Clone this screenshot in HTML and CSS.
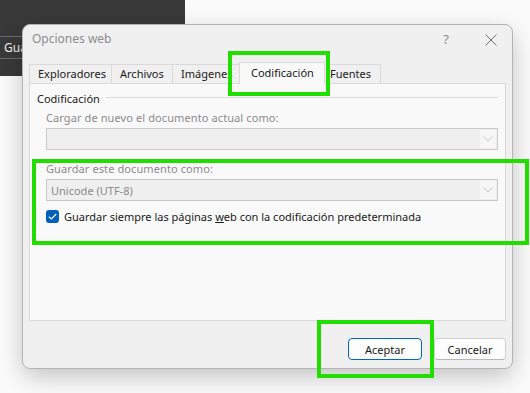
FILE: index.html
```html
<!DOCTYPE html>
<html lang="es">
<head>
    <meta charset="UTF-8">
    <meta name="viewport" content="width=device-width, initial-scale=1.0">
    <title>Opciones web</title>
    <link rel="stylesheet" href="styles.css">
</head>
<body>
    <!-- Window behind the dialog -->
    <div class="back-window">
        <div class="back-row">Gua</div>
    </div>

    <!-- Dialog -->
    <div class="dialog">
        <div class="titlebar">
            <span class="title">Opciones web</span>
            <span class="help">?</span>
            <svg class="close" width="12" height="12" viewBox="0 0 12 12">
                <path d="M0.5 0.5 L11.5 11.5 M11.5 0.5 L0.5 11.5" stroke="#6e6e6e" stroke-width="1" fill="none"/>
            </svg>
        </div>

        <div class="tabs">
            <div class="tab tab-1">Exploradores</div>
            <div class="tab tab-2">Archivos</div>
            <div class="tab tab-3">Imágenes</div>
            <div class="tab tab-active">Codificación</div>
            <div class="tab tab-5">Fuentes</div>
        </div>

        <div class="panel">
            <div class="group-title">
                <span>Codificación</span>
                <div class="group-line"></div>
            </div>
            <div class="group-body">
                <div class="field-label">Cargar de nuevo el documento actual como:</div>
                <div class="select">
                    <span class="select-text"></span>
                    <div class="select-arrow">
                        <svg width="10" height="6" viewBox="0 0 10 6"><path d="M0.5 0.5 L5 5 L9.5 0.5" stroke="#c4c4c4" fill="none"/></svg>
                    </div>
                </div>

                <div class="field-label second">Guardar este documento como:</div>
                <div class="select">
                    <span class="select-text">Unicode (UTF-8)</span>
                    <div class="select-arrow">
                        <svg width="10" height="6" viewBox="0 0 10 6"><path d="M0.5 0.5 L5 5 L9.5 0.5" stroke="#c4c4c4" fill="none"/></svg>
                    </div>
                </div>

                <div class="check-row">
                    <div class="checkbox">
                        <svg width="9" height="7" viewBox="0 0 9 7"><path d="M0.8 3.6 L3.3 6 L8.2 1" stroke="#fff" stroke-width="1.1" fill="none"/></svg>
                    </div>
                    <span>Guardar siempre las páginas <u>w</u>eb con la codificación predeterminada</span>
                </div>
            </div>
        </div>

        <div class="footer">
            <button class="btn btn-primary">Aceptar</button>
            <button class="btn">Cancelar</button>
        </div>
    </div>

    <!-- Green highlight boxes -->
    <div class="mark mark-tab"></div>
    <div class="mark mark-save"></div>
    <div class="mark mark-ok"></div>
</body>
</html>
```

FILE: styles.css
```css
body {
    margin: 0;
    width: 530px;
    height: 393px;
    background-color: #fbfbfb;
    font-family: "Noto Sans", sans-serif;
    font-size: 11px;
    color: #1a1a1a;
    position: relative;
    overflow: hidden;
}
.back-window {
    position: absolute;
    left: 0;
    top: 0;
    width: 185px;
    height: 76px;
    background-color: #393939;
}
.back-row {
    margin-top: 36px;
    height: 21px;
    border-top: 1px solid #6b6b6b;
    border-bottom: 1px solid #6b6b6b;
    color: #f0f0f0;
    font-size: 12px;
    line-height: 21px;
    padding-left: 4px;
}
.dialog {
    position: absolute;
    left: 22px;
    top: 24px;
    width: 489px;
    height: 343px;
    background-color: #f0f0f0;
    border: 1px solid #b4b4b4;
    border-radius: 8px;
    box-shadow: 0 8px 24px rgba(0, 0, 0, 0.22);
    display: flex;
    flex-direction: column;
}
.titlebar {
    height: 36px;
    display: flex;
    align-items: flex-start;
    padding-left: 9px;
    padding-top: 6px;
    box-sizing: border-box;
}
.title {
    flex: 1;
    color: #8c8c8c;
    font-size: 12px;
    line-height: 16px;
}
.help {
    color: #8c8c8c;
    font-size: 13px;
    line-height: 16px;
    margin-right: 36px;
}
.close {
    margin-right: 15px;
    margin-top: 3px;
}
.tabs {
    display: flex;
    align-items: flex-end;
    padding-left: 6px;
    height: 22px;
}
.tab {
    line-height: 18px;
    background-color: #f0f0f0;
    border: 1px solid #d9d9d9;
    border-bottom: none;
    padding: 0 0 0 8px;
    box-sizing: border-box;
    height: 19px;
    white-space: nowrap;
    overflow: hidden;
}
.tab-1 { width: 83px; }
.tab-2 { width: 61px; border-left: none; }
.tab-3 { width: 68px; border-left: none; }
.tab-5 { width: 56px; border-left: none; padding-left: 5px; }
.tab-active {
    width: 86px;
    height: 22px;
    margin-left: -2px;
    margin-bottom: -1px;
    padding-left: 11px;
    line-height: 20px;
    background-color: #f9f9f9;
    position: relative;
    z-index: 1;
}
.panel {
    margin: 0 6px 0 6px;
    height: 238px;
    background-color: #f9f9f9;
    border: 1px solid #d9d9d9;
    padding: 6px 7px 0 7px;
    box-sizing: border-box;
}
.group-title {
    display: flex;
    align-items: center;
    height: 16px;
}
.group-line {
    flex: 1;
    height: 1px;
    background-color: #dcdcdc;
    margin-left: 6px;
    margin-top: -1px;
}
.group-body {
    padding-left: 9px;
}
.field-label {
    color: #8b8b8b;
    margin-top: 3px;
    height: 18px;
    line-height: 18px;
    letter-spacing: 0.1px;
}
.field-label.second {
    margin-top: 10px;
}
.select {
    height: 22px;
    margin-top: 1px;
    background-color: #efefef;
    border: 1px solid #c9c9c9;
    box-sizing: border-box;
    display: flex;
    align-items: center;
}
.select-text {
    flex: 1;
    padding-left: 4px;
    color: #8b8b8b;
}
.select-arrow {
    width: 16px;
    height: 18px;
    margin-right: 1px;
    background-color: #f6f6f6;
    display: flex;
    align-items: center;
    justify-content: center;
}
.check-row {
    display: flex;
    align-items: center;
    margin-top: 8px;
}
.checkbox {
    width: 13px;
    height: 13px;
    border-radius: 3px;
    background-color: #005fb8;
    display: flex;
    align-items: center;
    justify-content: center;
    margin-right: 5px;
}
.footer {
    display: flex;
    justify-content: flex-end;
    gap: 12px;
    padding: 17px 6px 0 0;
}
.btn {
    font-family: "Noto Sans", sans-serif;
    font-size: 11px;
    color: #1a1a1a;
    height: 22px;
    background-color: #fdfdfd;
    border: 1px solid #d0d0d0;
    border-bottom-color: #b8b8b8;
    border-radius: 4px;
    padding: 0;
    width: 72px;
}
.btn-primary {
    width: 74px;
    border: 1px solid #0067c0;
    background-color: #fdfdfd;
}
.mark {
    position: absolute;
    border: 4px solid #22de00;
    box-sizing: border-box;
}
.mark-tab {
    left: 228px;
    top: 51px;
    width: 102px;
    height: 45px;
}
.mark-save {
    left: 32px;
    top: 159px;
    width: 497px;
    height: 86px;
}
.mark-ok {
    left: 317px;
    top: 320px;
    width: 117px;
    height: 58px;
}
```
